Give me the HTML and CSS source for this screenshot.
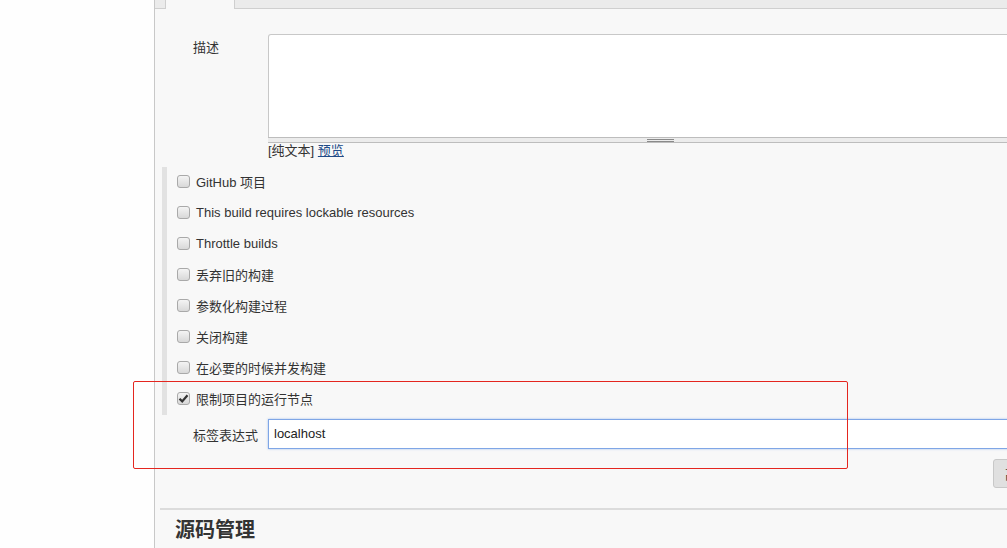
FILE: index.html
```html
<!DOCTYPE html>
<html lang="zh-CN">
<head>
<meta charset="utf-8">
<title>配置</title>
<link rel="stylesheet" href="styles.css">
</head>
<body>
<div class="page">
  <div class="gutter"></div>
  <div class="main">
    <div class="tabbar">
      <div class="tab-stub"></div>
      <div class="tab-active"></div>
      <div class="tab-rest"></div>
    </div>

    <div class="row desc-row">
      <div class="label label-top">描述</div>
      <div class="field">
        <div class="textarea"></div>
        <div class="resizer"><span class="grip"></span></div>
        <div class="hint">[纯文本] <a class="link" href="#">预览</a></div>
      </div>
    </div>

    <div class="options">
      <div class="opt"><span class="cb"></span><span>GitHub 项目</span></div>
      <div class="opt"><span class="cb"></span><span>This build requires lockable resources</span></div>
      <div class="opt"><span class="cb"></span><span>Throttle builds</span></div>
      <div class="opt"><span class="cb"></span><span>丢弃旧的构建</span></div>
      <div class="opt"><span class="cb"></span><span>参数化构建过程</span></div>
      <div class="opt"><span class="cb"></span><span>关闭构建</span></div>
      <div class="opt"><span class="cb"></span><span>在必要的时候并发构建</span></div>
      <div class="opt"><span class="cb checked"><svg width="11" height="11" viewBox="0 0 11 11"><path d="M1.5 5.8 L4.2 8.4 L9.5 2.2" fill="none" stroke="#333" stroke-width="2.2"/></svg></span><span>限制项目的运行节点</span></div>
    </div>

    <div class="row expr-row">
      <div class="label">标签表达式</div>
      <div class="field">
        <div class="input">localhost</div>
      </div>
    </div>

    <div class="row btn-row">
      <div class="label"></div>
      <div class="field btn-field">
        <span class="button">高级...</span>
      </div>
    </div>

    <div class="divider"></div>
    <h2 class="section-title">源码管理</h2>
  </div>
</div>
<div class="annotation"></div>
</body>
</html>
```

FILE: styles.css
```css
html, body {
  margin: 0;
  padding: 0;
  overflow: hidden;
  background: #fefefe;
}
body {
  font-family: "Liberation Sans", Arial, "Noto Sans CJK SC", sans-serif;
  font-size: 13px;
  color: #333;
  width: 1007px;
  height: 548px;
  position: relative;
}
.page {
  display: flex;
  height: 548px;
}
.gutter {
  width: 154px;
  flex: none;
  background: #fefefe;
}
.main {
  flex: 1;
  min-width: 0;
  border-left: 1px solid #c8c8c8;
  background: #f8f8f8;
  overflow: hidden;
}
.tabbar {
  display: flex;
  height: 9px;
}
.tab-stub {
  width: 10px;
  height: 8px;
  background: #ebebeb;
  border-right: 1px solid #cfcfcf;
  border-bottom: 1px solid #cfcfcf;
}
.tab-active {
  width: 68px;
  height: 9px;
  background: #f8f8f8;
}
.tab-rest {
  flex: 1;
  height: 8px;
  background: #ebebeb;
  border-left: 1px solid #cfcfcf;
  border-bottom: 1px solid #cfcfcf;
}
.row {
  display: grid;
  grid-template-columns: 75px 784px;
  padding-left: 38px;
}
.desc-row {
  margin-top: 25px;
}
.label {
  display: flex;
  align-items: center;
  white-space: nowrap;
  color: #333;
}
.label-top {
  align-items: flex-start;
  padding-top: 6px;
  line-height: 16px;
}
.textarea {
  height: 102px;
  background: #fff;
  border: 1px solid #c8c8c8;
  border-bottom: none;
  border-radius: 3px 3px 0 0;
}
.resizer {
  height: 4px;
  background: #ececec;
  border-top: 1px solid #bdbdbd;
  border-bottom: 1px solid #bdbdbd;
  display: flex;
  justify-content: center;
  align-items: center;
}
.grip {
  width: 27px;
  height: 1px;
  border-top: 1px solid #8a8a8a;
  border-bottom: 1px solid #8a8a8a;
}
.hint {
  line-height: 16px;
  color: #333;
}
.link {
  color: #204a87;
  text-decoration: underline;
}
.options {
  margin-top: 8px;
  margin-left: 7px;
  border-left: 5px solid #e2e2e2;
  padding-left: 10px;
}
.opt {
  height: 29px;
  padding-bottom: 2px;
  display: flex;
  align-items: center;
  gap: 6px;
  white-space: nowrap;
}
.cb {
  width: 11px;
  height: 11px;
  border: 1px solid #a9a9a9;
  border-radius: 3px;
  background: linear-gradient(#f4f4f4, #d8d8d8);
  display: flex;
  align-items: center;
  justify-content: center;
  flex: none;
}
.cb svg {
  display: block;
}
.expr-row {
  margin-top: 4px;
}
.input {
  height: 28px;
  background: #fff;
  border: 1px solid #7fa6e6;
  box-shadow: 0 0 2px rgba(100, 150, 230, 0.6);
  display: flex;
  align-items: center;
  padding-left: 5px;
  padding-bottom: 1px;
  box-sizing: border-box;
  height: 30px;
  color: #222;
}
.btn-row {
  margin-top: 10px;
}
.btn-field {
  display: flex;
  justify-content: flex-end;
}
.button {
  width: 46px;
  height: 27px;
  border: 1px solid #c8c8c8;
  border-radius: 3px;
  background: #e0e0e0;
  display: flex;
  align-items: center;
  padding-left: 11px;
  color: #333;
  white-space: nowrap;
}
.divider {
  margin-top: 20px;
  margin-left: 5px;
  border-top: 2px solid #dcdcdc;
}
.section-title {
  margin: 8px 0 0 20px;
  font-size: 20px;
  font-weight: bold;
  line-height: 24px;
  color: #333;
}
.annotation {
  position: absolute;
  left: 133px;
  top: 381px;
  width: 713px;
  height: 86px;
  border: 1px solid #e4261f;
  border-radius: 2px;
  pointer-events: none;
}
```
